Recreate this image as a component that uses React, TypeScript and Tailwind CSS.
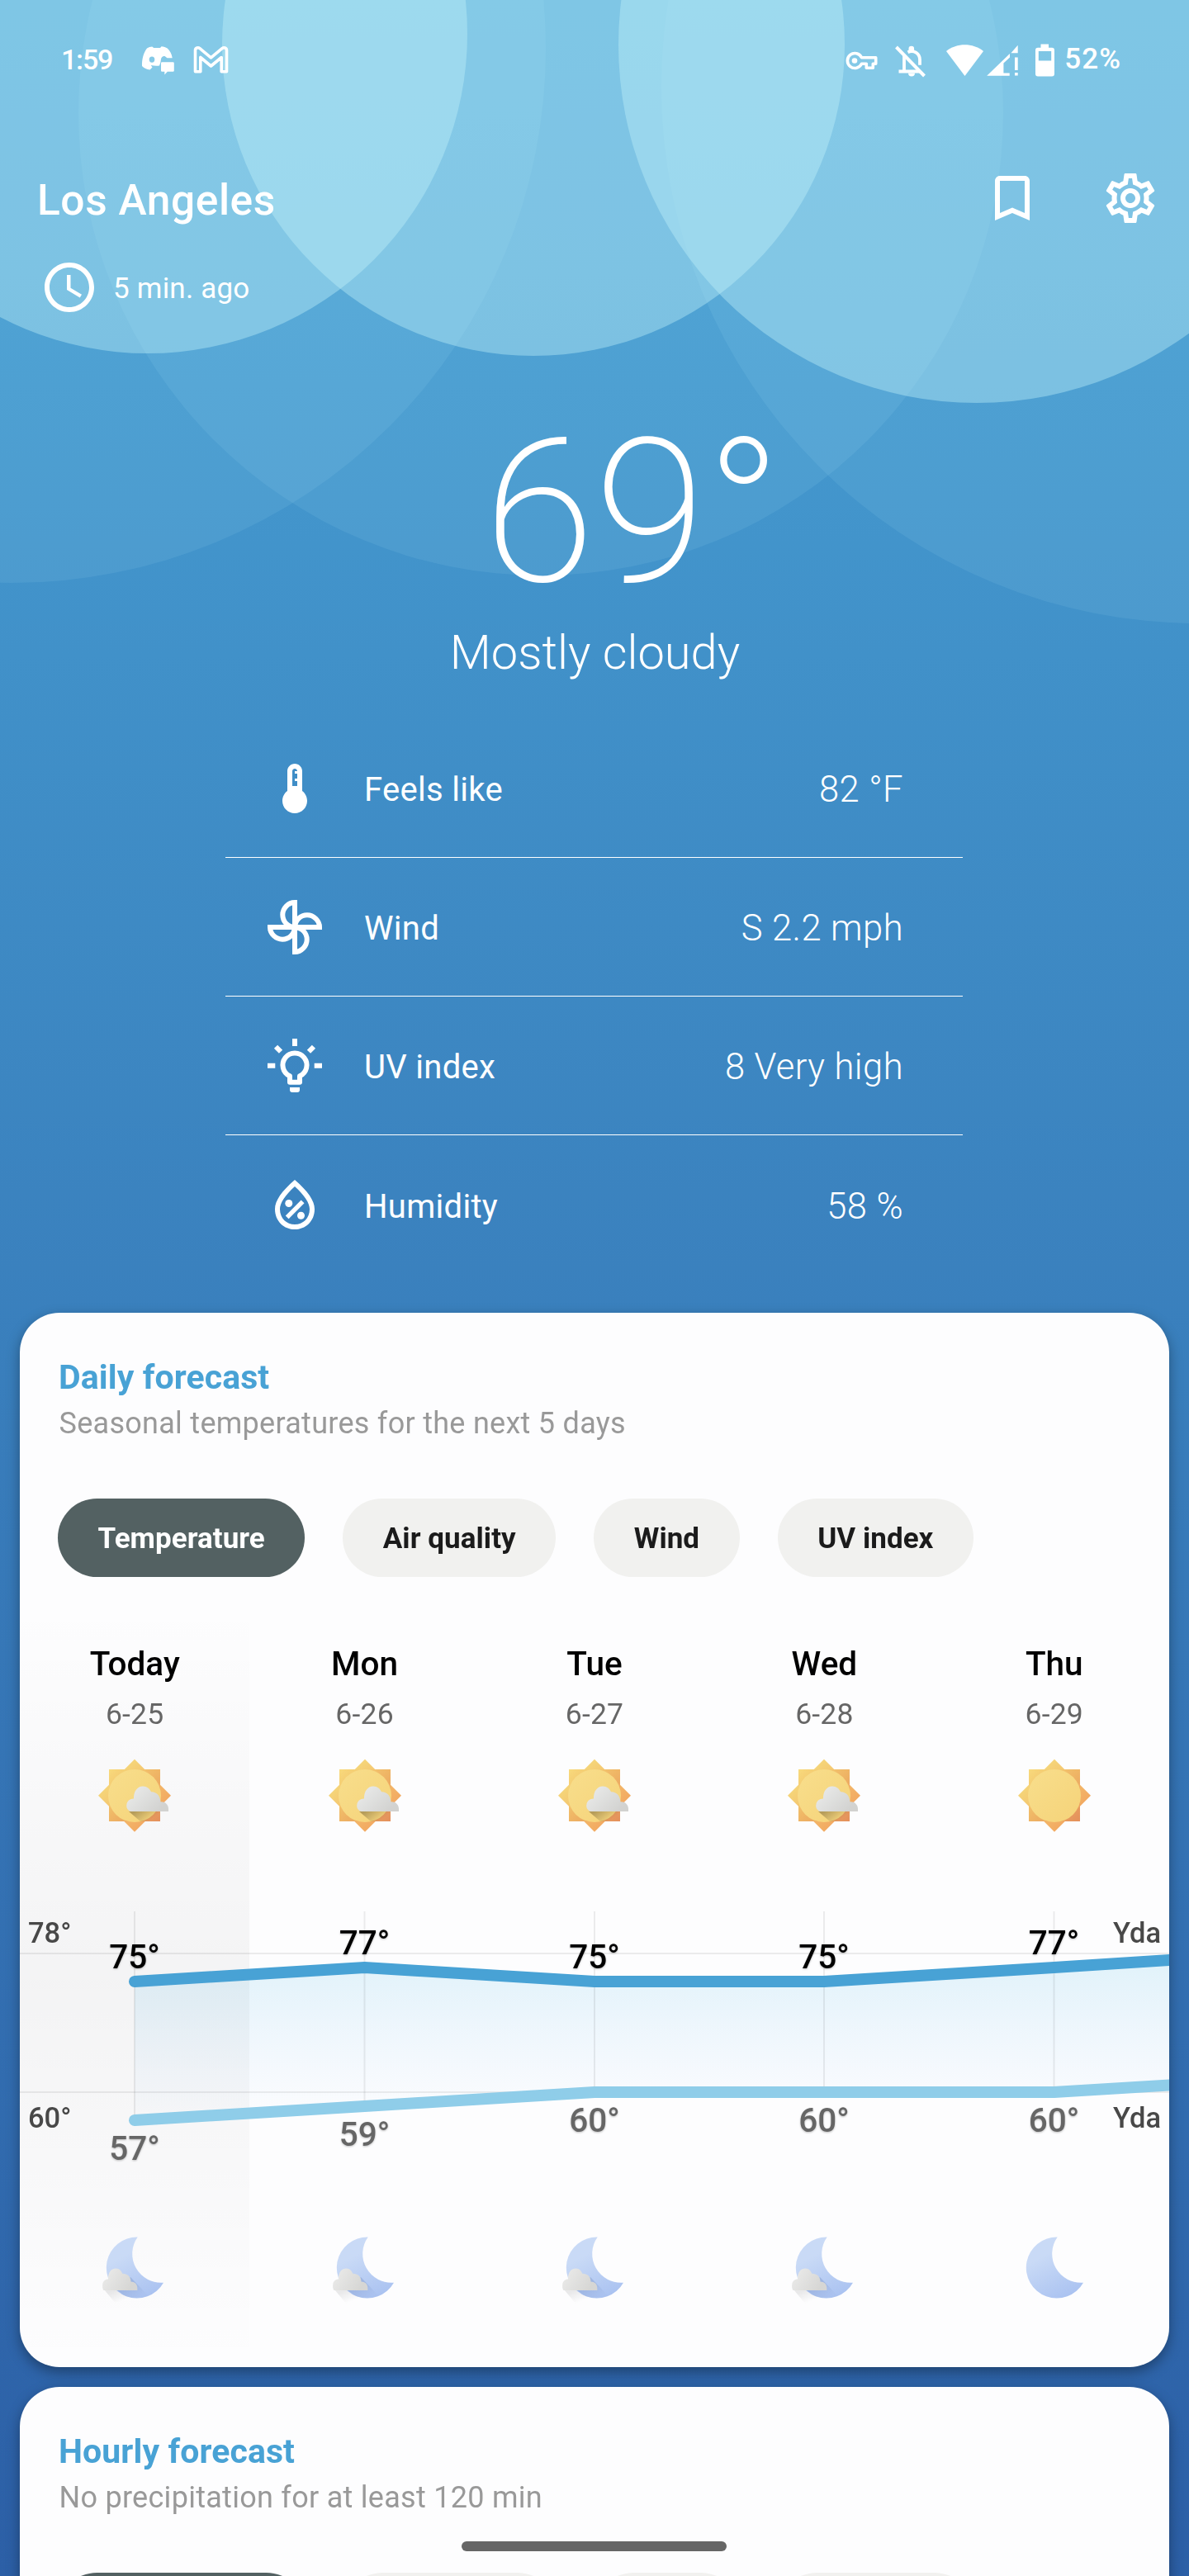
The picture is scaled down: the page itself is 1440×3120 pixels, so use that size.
import type { ReactNode } from "react";
import {
  MdAccessTime,
  MdBookmarkBorder,
  MdOutlineSettings,
} from "react-icons/md";

const days = [
  { name: "Today", date: "6-25", high: 75, low: 57, cloudy: true },
  { name: "Mon", date: "6-26", high: 77, low: 59, cloudy: true },
  { name: "Tue", date: "6-27", high: 75, low: 60, cloudy: true },
  { name: "Wed", date: "6-28", high: 75, low: 60, cloudy: true },
  { name: "Thu", date: "6-29", high: 77, low: 60, cloudy: false },
];

/* Overlapping translucent discs behind the header */
function Backdrop() {
  return (
    <svg
      className="absolute inset-0 h-[3120px] w-[1440px]"
      viewBox="0 0 1440 3120"
      aria-hidden
    >
      <g fill="#c2f3fb" fillOpacity="0.09">
        <circle cx="14" cy="59" r="647" />
        <circle cx="655" cy="137" r="560" />
        <circle cx="1451" cy="105" r="650" />
      </g>
      <g fill="#c2f3fb" fillOpacity="0.4">
        <circle cx="179" cy="41" r="387" />
        <circle cx="646" cy="54" r="377" />
        <circle cx="1183" cy="54" r="434" />
      </g>
    </svg>
  );
}

function StatusBar() {
  return (
    <div className="flex h-[145px] items-center justify-between pr-[82px] pl-[74px]">
      <div className="flex items-center">
        <span className="w-[62px] text-[34px] font-medium tracking-[-1.2px]">1:59</span>
        <svg className="ml-[35px] h-[36px] w-[41px]" viewBox="171 57.5 41 36">
          <path
            fill="#fff"
            fillRule="evenodd"
            d="M184.300 59L186.200 60.600H194L195.500 58.800C198.500 59 200.700 59.800 202.700 61C206 64 208 68 208.700 72.700H202.500L199.500 70.500C197.500 70 195.500 71.500 195 74L194.300 78.500L193 82C189.500 82.500 186.500 82.200 182.700 81.500L184.500 84L181.500 87C177.500 86.400 174.500 85 172 82.500C171.800 74.500 173.500 67 178 61C180 59.800 182 59.200 184.300 59ZM184 71a3.300 3.600 0 1 0 0 7.200a3.300 3.600 0 1 0 0-7.200z"
          />
          <path fill="#fff" d="M196.300 77.700h13.200a1.300 1.300 0 0 1 1.300 1.300v9a1.300 1.300 0 0 1-1.300 1.300h-6.700l-3.500 3.600v-3.600h-3a1.300 1.300 0 0 1-1.300-1.300v-9a1.300 1.300 0 0 1 1.300-1.300z" />
        </svg>
        <svg className="ml-[22px] h-[36px] w-[43px]" viewBox="234 54.5 43 36">
          <path
            fill="none"
            stroke="#fff"
            strokeWidth="3.600"
            strokeLinejoin="round"
            d="M236.500 60.500c0-3.200 3.500-4 5.500-2.400l13.500 11.200 13.500-11.200c2-1.600 5.500-.8 5.500 2.400v25.700h-6.300V69l-12.700 10.500L242.800 69v17.200h-6.300z"
          />
        </svg>
      </div>
      <div className="flex items-center">
        <svg className="h-[44px] w-[256px]" viewBox="1023 50.500 256 44">
          <g fill="none" stroke="#fff" strokeWidth="3.600">
            <path strokeLinejoin="round" d="M1042.500 69.200h17.200v7.600h-3.400v5h-8v-5h-5.800a9 9 0 1 1 0-7.600z" />
            <path strokeWidth="4" d="M1084.500 56.500l34 35" />
            <path strokeWidth="3.800" d="M1094 66v21.500M1087.500 86h26" />
            <path strokeWidth="3.800" d="M1098.500 62.800c7-3.500 14.500 1.500 14.500 9v6.500" />
          </g>
          <g fill="#fff">
            <circle cx="1034" cy="73" r="3.300" />
            <path d="M1099.500 61v-2.500a3.300 3.300 0 0 1 6.600 0V61zM1099 88h8a4 4 0 0 1-8 0z" />
            <path d="M1145 61.500c13-10.200 32-10.200 45 0l-22.500 30z" />
            <path d="M1231.700 54.300v9.500h-8.300zM1222 64.500v4.500l-7.600 7v12h7.300v3.200h-27.500zM1228 69h3.700v15.500h-3.700zM1228 87.500h3.700v3.600h-3.700z" />
            <path
              fillRule="evenodd"
              d="M1259.500 53h9.500v4.300h4a3 3 0 0 1 3 3V89a3 3 0 0 1-3 3h-17a3 3 0 0 1-3-3V60.300a3 3 0 0 1 3-3h3.500zM1256.800 61.500v11.500h15.400V61.500z"
            />
          </g>
        </svg>
        <span className="ml-[9px] text-[35px] font-medium tracking-[1.100px]">52%</span>
      </div>
    </div>
  );
}

function Header() {
  return (
    <header>
      <div className="mt-[59px] flex h-[72px] items-center pr-[35px] pl-[45px]">
        <h1 className="pt-[6px] text-[51.500px] leading-[60px] font-medium tracking-[0.550px]">
          Los Angeles
        </h1>
        <MdBookmarkBorder className="ml-auto size-[72px]" />
        <MdOutlineSettings className="ml-[71px] size-[72px]" />
      </div>
      <div className="mt-[36px] flex h-[72px] items-center pl-[48px]">
        <MdAccessTime className="size-[72px]" />
        <span className="ml-[17px] pt-[3px] text-[35px] leading-[48px] tracking-[0.200px]">
          5 min. ago
        </span>
      </div>
    </header>
  );
}

function Conditions() {
  return (
    <section className="mt-[117px] flex flex-col items-center">
      <div className="relative text-[244px] leading-[240px] font-extralight">
        69<span className="absolute top-0 left-full">°</span>
      </div>
      <p className="mt-[13px] pl-px text-[57.800px] leading-[72px] font-light">Mostly cloudy</p>
    </section>
  );
}

function Metric({ icon, label, value }: { icon: ReactNode; label: string; value: string }) {
  return (
    <li className="flex h-[168px] items-center border-b border-white pr-[72px] pl-[48px] last:border-b-0">
      <svg className="size-[72px]" viewBox="0 0 24 24" fill="#fff">
        {icon}
      </svg>
      <span className="ml-[48px] pt-[5px] text-[40px] tracking-[0.300px]">{label}</span>
      <span className="ml-auto pt-[5px] text-[43.500px] font-light tracking-[0.450px]">{value}</span>
    </li>
  );
}

function Metrics() {
  return (
    <ul className="mt-[45px] ml-[273px] w-[893px]">
      <Metric
        label="Feels like"
        value="82 °F"
        icon={
          <path d="M15 13V5c0-1.660-1.340-3-3-3S9 3.340 9 5v8c-1.210.910-2 2.370-2 4 0 2.760 2.240 5 5 5s5-2.240 5-5c0-1.630-.790-3.090-2-4zm-4-8c0-.550.450-1 1-1s1 .450 1 1h-1v1h1v2h-1v1h1v2h-2V5z" />
        }
      />
      <Metric
        label="Wind"
        value="S 2.2 mph"
        icon={
          <g fill="none" stroke="#fff" strokeWidth="2">
            {[0, 90, 180, 270].map((a) => (
              <path
                key={a}
                transform={`rotate(${a} 12 12)`}
                d="M12 12C12.200 9 14.400 7.100 17 7.100S22 9.300 22 12Z"
              />
            ))}
          </g>
        }
      />
      <Metric
        label="UV index"
        value="8 Very high"
        icon={
          <g>
            <path
              fill="none"
              stroke="#fff"
              strokeWidth="2"
              strokeLinejoin="round"
              d="M10 18.600V16.100a4.850 4.850 0 1 1 4 0V18.600Z"
            />
            <path d="M10 20.700h4v1a1 1 0 0 1-1 1h-2a1 1 0 0 1-1-1z" />
            <path
              fill="none"
              stroke="#fff"
              strokeWidth="2"
              d="M12 1v3M1 11.900h3.100M19.900 11.900H23M4.350 4.250l2 2M19.650 4.250l-2 2"
            />
          </g>
        }
      />
      <Metric
        label="Humidity"
        value="58 %"
        icon={
          <g>
            <path d="M12 2c-5.330 4.550-8 8.480-8 11.800 0 4.980 3.800 8.200 8 8.200s8-3.220 8-8.200c0-3.320-2.670-7.250-8-11.800zm0 18c-3.350 0-6-2.570-6-6.200 0-2.340 1.950-5.440 6-9.140 4.050 3.700 6 6.790 6 9.140 0 3.630-2.650 6.200-6 6.200z" />
            <circle cx="9.600" cy="11.500" r="1.500" />
            <circle cx="14.500" cy="16.400" r="1.500" />
            <path fill="none" stroke="#fff" strokeWidth="1.800" d="M15.200 10.800L8.900 17.100" />
          </g>
        }
      />
    </ul>
  );
}

function Sun({ cloudy }: { cloudy: boolean }) {
  return (
    <svg className="size-[110px]" viewBox="0 0 110 110">
      <path fill="url(#sunSquare)" d="M24 23h62v63H24z" />
      <path fill="url(#sunDiamond)" d="M55 10.700L99 54.700 55 98.700 11 54.700z" />
      <path fill="url(#sunSquare)" d="M24 23h62v63H24z" opacity="0.600" />
      <circle cx="55" cy="55" r="32" fill="url(#sunDisc)" />
      {cloudy && (
        <g>
          <path fill="url(#sunShade)" d="M48 74h38v12H62z" />
          <path
            fill="url(#cloud)"
            d="M50 74C46 72 45 69 45.300 66.500C45.600 61.500 49.500 58.500 54 58.600C53.500 49.500 58.500 43.500 65 43.500C70 43.500 73.500 46.500 75 50.300C81.500 50 86 55 86.500 62.300C92 62 96 65.500 96 71V74Z"
          />
        </g>
      )}
    </svg>
  );
}

function Moon({ cloudy }: { cloudy: boolean }) {
  return (
    <svg className="size-[110px]" viewBox="0 0 110 110">
      {cloudy && <path fill="url(#moonHaze)" d="M18 81h40l24 24H38z" />}
      <path fill="url(#moon)" d="M58.700 17.500A35 35 0 0 0 90 72.700A37 37 0 1 1 58.700 17.500Z" />
      {cloudy && (
        <g>
          <path fill="url(#moonShade)" d="M34 82L50 66 71 88C62 93 50 92 42 88z" />
          <path
            fill="url(#cloudSmall)"
            d="M17.500 82C16 80 16 77.500 16.200 75C16.500 71 19.500 68.500 23 68.500C22.500 60 27 55.500 32.500 55.500C36.500 55.500 39 58.500 40.300 61.700C46 61.500 50.500 65 50.500 71.500C55 71.500 58.300 74.500 58.300 79V82Z"
          />
        </g>
      )}
    </svg>
  );
}

function SharedGradients() {
  return (
    <svg className="absolute size-0" aria-hidden>
      <defs>
        <linearGradient id="sunSquare" x1="0" y1="0" x2="1" y2="1">
          <stop offset="0" stopColor="#f8da7c" />
          <stop offset="0.500" stopColor="#efb565" />
          <stop offset="1" stopColor="#e48f5b" />
        </linearGradient>
        <linearGradient id="sunDiamond" x1="0.250" y1="0.250" x2="0.750" y2="0.750">
          <stop offset="0" stopColor="#f5d478" />
          <stop offset="1" stopColor="#f2aa62" />
        </linearGradient>
        <linearGradient id="sunDisc" x1="0" y1="0" x2="1" y2="1">
          <stop offset="0" stopColor="#f8de8c" />
          <stop offset="1" stopColor="#f5d379" />
        </linearGradient>
        <linearGradient id="sunShade" gradientUnits="userSpaceOnUse" x1="58" y1="72" x2="70" y2="88">
          <stop offset="0" stopColor="#8a7440" stopOpacity="0.600" />
          <stop offset="1" stopColor="#8a7440" stopOpacity="0" />
        </linearGradient>
        <linearGradient id="cloud" x1="0" y1="0" x2="1" y2="0.600">
          <stop offset="0.200" stopColor="#e7e8e7" />
          <stop offset="1" stopColor="#d2d2d0" />
        </linearGradient>
        <linearGradient id="cloudSmall" x1="0" y1="0" x2="1" y2="0.400">
          <stop offset="0.200" stopColor="#e8e8e7" />
          <stop offset="1" stopColor="#d6d6d4" />
        </linearGradient>
        <linearGradient id="moon" gradientUnits="userSpaceOnUse" x1="35" y1="28" x2="68" y2="90">
          <stop offset="0.200" stopColor="#c9daf6" />
          <stop offset="1" stopColor="#abc3f1" />
        </linearGradient>
        <linearGradient id="moonShade" gradientUnits="userSpaceOnUse" x1="46" y1="70" x2="62" y2="90">
          <stop offset="0" stopColor="#7f99cc" stopOpacity="0.500" />
          <stop offset="1" stopColor="#7f99cc" stopOpacity="0.050" />
        </linearGradient>
        <linearGradient id="moonHaze" gradientUnits="userSpaceOnUse" x1="36" y1="80" x2="42" y2="94">
          <stop offset="0" stopColor="#000" stopOpacity="0.080" />
          <stop offset="1" stopColor="#000" stopOpacity="0" />
        </linearGradient>
        <linearGradient id="area" gradientUnits="userSpaceOnUse" x1="0" y1="80" x2="0" y2="265">
          <stop offset="0" stopColor="#5cc0e8" stopOpacity="0.170" />
          <stop offset="1" stopColor="#7fb8f8" stopOpacity="0.010" />
        </linearGradient>
      </defs>
    </svg>
  );
}

/* Centre of each day's column, in chart coordinates */
const columnX = [139, 417.500, 696, 974, 1252.500];
const highY = [100, 83, 100, 100, 83];
const lowY = [268, 251, 234, 234, 234];

function TemperatureChart() {
  const high = columnX.map((x, i) => `${x},${highY[i]}`).join(" ") + " 1400,73.500";
  const low = columnX.map((x, i) => `${x},${lowY[i]}`).join(" ") + " 1400,225";
  return (
    <svg
      className="mt-[70px] h-[340px] w-[1392px] font-[Roboto] font-medium"
      viewBox="0 0 1392 340"
    >
      <path stroke="#000" strokeOpacity="0.070" strokeWidth="2" d="M0 66h1392M0 234h1392" />
      <polygon
        fill="url(#area)"
        points={`${high} 1400,225 ${columnX.map((x, i) => `${x},${lowY[i]}`).reverse().join(" ")}`}
      />
      {columnX.map((x, i) => (
        <path key={x} stroke="#000" strokeOpacity="0.070" strokeWidth="2" d={`M${x} 15V${lowY[i]}`} />
      ))}
      <g fill="none" strokeWidth="14" strokeLinecap="round" strokeLinejoin="round">
        <polyline stroke="#48a2d5" points={high} />
        <polyline stroke="#8fcde9" points={low} />
      </g>
      <g fill="#484848" fontSize="34.500">
        <text x="10" y="52.500">78°</text>
        <text x="10" y="276.500">60°</text>
        <text x="1382" y="52.500" textAnchor="end">Yda</text>
        <text x="1382" y="276.500" textAnchor="end">Yda</text>
      </g>
      <g fontSize="40.500" textAnchor="middle" className="drop-shadow-[0_1px_1px_rgba(0,0,0,0.25)]">
        {days.map((d, i) => (
          <g key={d.name}>
            <text x={columnX[i]} y={highY[i] - 16} fill="#000">{d.high}°</text>
            <text x={columnX[i]} y={lowY[i] + 48} fill="#666">{d.low}°</text>
          </g>
        ))}
      </g>
    </svg>
  );
}

function Card({
  title,
  subtitle,
  children,
}: {
  title: string;
  subtitle: string;
  children?: ReactNode;
}) {
  return (
    <section className="relative mx-6 h-[1277px] overflow-hidden rounded-[48px] bg-[#fdfdfe] pt-[54px]">
      <h2 className="pl-[47px] text-[41px] leading-[48px] font-bold tracking-[0.100px] text-[#48a2d5]">
        {title}
      </h2>
      <p className="mt-[10px] pl-[47.500px] text-[36px] leading-[44px] tracking-[0.280px] text-[#999]">
        {subtitle}
      </p>
      {children}
    </section>
  );
}

function DailyTabs() {
  return (
    <div className="mt-[69px] ml-[46px] flex gap-[46px] text-[35px] font-bold tracking-[0.050px] text-[#1b1b1b]">
      <button className="h-[95px] rounded-full bg-[#536162] px-[48.500px] pt-[4px] text-white">
        Temperature
      </button>
      <button className="h-[95px] rounded-full bg-[#f1f1ef] px-[48.500px] pt-[4px]">
        Air quality
      </button>
      <button className="h-[95px] rounded-full bg-[#f1f1ef] px-[48.500px] pt-[4px]">Wind</button>
      <button className="h-[95px] rounded-full bg-[#f1f1ef] px-[48.500px] pt-[4px]">
        UV index
      </button>
    </div>
  );
}

function HourlyTabs() {
  return (
    <div className="mt-[69px] ml-[46px] flex gap-[46px]">
      <div className="h-[95px] w-[300px] rounded-full bg-[#536162]" />
      <div className="h-[95px] w-[258px] rounded-full bg-[#f1f1ef]" />
      <div className="h-[95px] w-[176px] rounded-full bg-[#f1f1ef]" />
      <div className="h-[95px] w-[237px] rounded-full bg-[#f1f1ef]" />
    </div>
  );
}

function DailyForecast() {
  return (
    <div className="relative mt-[30px] pt-[50px]">
      <div className="absolute top-0 left-0 h-[927px] w-[278px] bg-linear-to-b from-black/0 via-black/[0.038] to-black/0" />
      <div className="relative">
        <div className="grid grid-cols-5">
          {days.map((d) => (
            <div key={d.name} className="flex flex-col items-center">
              <span className="pt-px text-[40.500px] leading-[48px] font-medium text-black">{d.name}</span>
              <span className="mt-[17px] text-[35.500px] leading-[40px] tracking-[0.200px] text-[#666]">
                {d.date}
              </span>
              <div className="mt-[24px]">
                <Sun cloudy={d.cloudy} />
              </div>
            </div>
          ))}
        </div>
        <TemperatureChart />
        <div className="mt-[52px] grid grid-cols-5 justify-items-center">
          {days.map((d) => (
            <Moon key={d.name} cloudy={d.cloudy} />
          ))}
        </div>
      </div>
    </div>
  );
}

export default function App() {
  return (
    <main className="relative h-[3120px] w-[1440px] overflow-hidden bg-linear-to-b/srgb from-[#48a2d5] to-[#2c5fa6] font-[Roboto,sans-serif] text-white">
      <Backdrop />
      <SharedGradients />
      <div className="relative">
        <StatusBar />
        <Header />
        <Conditions />
        <Metrics />
        <div className="mt-[47px] flex flex-col gap-[24px]">
          <div className="drop-shadow-[0_6px_8px_rgba(0,0,0,0.35)]">
            <Card title="Daily forecast" subtitle="Seasonal temperatures for the next 5 days">
              <DailyTabs />
              <DailyForecast />
            </Card>
          </div>
          <div className="drop-shadow-[0_6px_8px_rgba(0,0,0,0.35)]">
            <Card title="Hourly forecast" subtitle="No precipitation for at least 120 min">
              <HourlyTabs />
            </Card>
          </div>
        </div>
      </div>
      <div className="absolute top-[3078px] left-[559px] h-[12px] w-[321px] rounded-full bg-[#666]" />
    </main>
  );
}
